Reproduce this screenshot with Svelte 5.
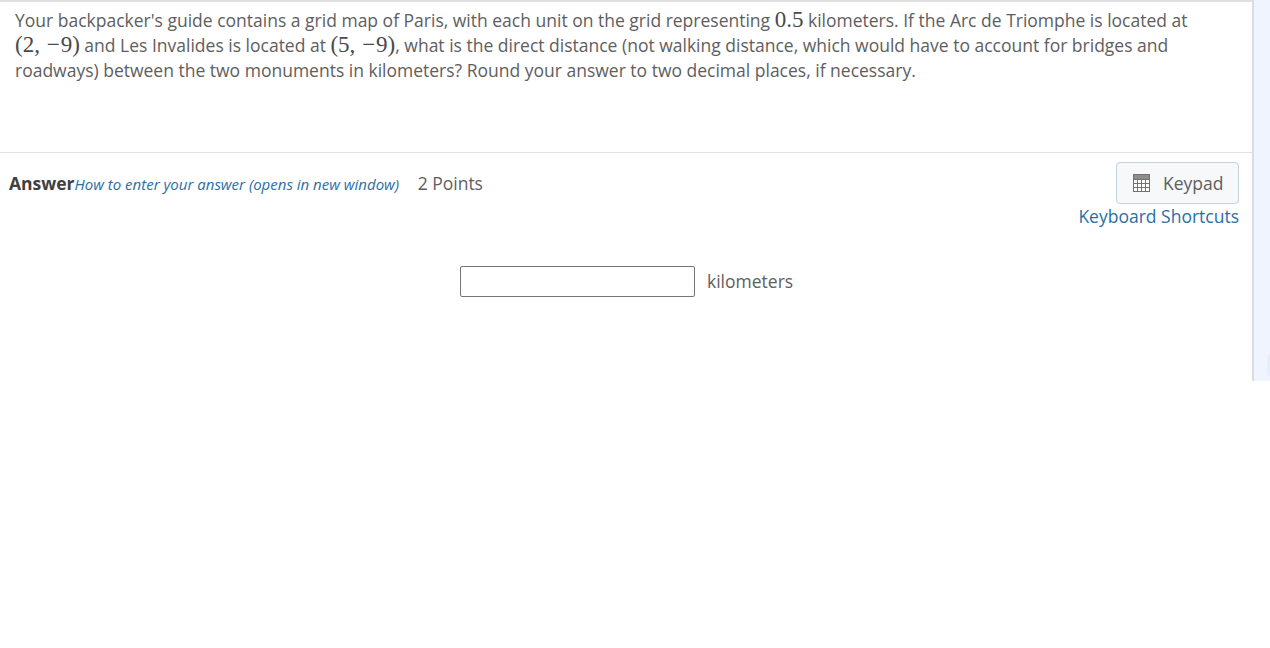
<script>
	let answer = $state('')
	const columns = [4, 8, 12]
	const rows = [9, 13]
</script>

<div class="shell">
	<main class="panel">
		<section class="question">
			<p>
				Your backpacker's guide contains a grid map of Paris, with each unit on the grid representing <span class="math">0.5</span> kilometers. If the Arc de Triomphe is located at
				<span class="math">(2, <span class="minus">−</span>9)</span> and Les Invalides is located at <span class="math">(5, <span class="minus">−</span>9)</span>, what is the direct distance (not walking distance, which would have to account for bridges and
				roadways) between the two monuments in kilometers? Round your answer to two decimal places, if necessary.
			</p>
		</section>

		<section class="answer">
			<div class="head">
				<div class="title">
					<strong>Answer</strong><a href="#help" class="help">How to enter your answer (opens in new window)</a>
					<span class="points">2 Points</span>
				</div>
				<div class="tools">
					<button class="keypad" type="button">
						<svg width="17" height="18" viewBox="0 0 17 18" aria-hidden="true">
							<rect x="0.5" y="0.5" width="16" height="17" fill="#fff" stroke="#77706c" />
							<rect x="1" y="1" width="15" height="4" fill="#8d8d8d" />
							{#each columns as c}
								<path d="M{c + 0.5} 5V17" stroke="#77706c" fill="none" />
							{/each}
							{#each rows as r}
								<path d="M1 {r + 0.5}H16" stroke="#77706c" fill="none" />
							{/each}
							<path d="M1 5.5H16" stroke="#77706c" fill="none" />
						</svg>
						<span>Keypad</span>
					</button>
					<a href="#shortcuts" class="shortcuts">Keyboard Shortcuts</a>
				</div>
			</div>
			<div class="entry">
				<input type="text" bind:value={answer} aria-label="Answer" />
				<span class="unit">kilometers</span>
			</div>
		</section>
	</main>
	<aside class="rail"><div class="handle"></div></aside>
</div>

<style>
	:global(body) {
		margin: 0;
		background: #fff;
	}
	.shell {
		display: flex;
		height: 381px;
		font-family: "Open Sans", sans-serif;
		font-size: 17.5px;
		color: #5e5e5e;
	}
	.panel {
		flex: 1;
		box-sizing: border-box;
		border-top: 2px solid #e0e0e0;
		border-right: 2px solid #dcdcdc;
	}
	.question {
		box-sizing: border-box;
		height: 151px;
		padding: 6px 15px 0;
		border-bottom: 1px solid #e0e0e0;
	}
	.question p {
		margin: 0;
		line-height: 25px;
	}
	.math {
		font-family: "Liberation Serif", serif;
		font-size: 23px;
		line-height: 20px;
		color: #4a4a4a;
		white-space: nowrap;
	}
	.minus {
		margin-left: 1px;
		margin-right: 1px;
	}
	.answer {
		padding: 9px 13px 0 9px;
	}
	.head {
		display: flex;
		justify-content: space-between;
		align-items: flex-start;
	}
	.title {
		margin-top: 8px;
		line-height: 26px;
	}
	.title strong {
		color: #404040;
		font-weight: 700;
	}
	.help {
		color: #2a6ea8;
		font-size: 15px;
		font-style: italic;
		text-decoration: none;
	}
	.points {
		margin-left: 14px;
	}
	.tools {
		display: flex;
		flex-direction: column;
		align-items: flex-end;
	}
	.keypad {
		display: flex;
		align-items: center;
		gap: 13px;
		box-sizing: border-box;
		width: 123px;
		height: 42px;
		padding: 0 0 0 16px;
		background: #f6f8fa;
		border: 1px solid #c3d2db;
		border-radius: 4px;
		font: inherit;
		color: #5e5e5e;
	}
	.shortcuts {
		line-height: 25px;
		color: #2a6ea8;
		text-decoration: none;
	}
	.entry {
		display: flex;
		align-items: center;
		gap: 12px;
		margin: 37px 0 0 451px;
	}
	.entry input {
		box-sizing: border-box;
		width: 235px;
		height: 31px;
		padding: 0 4px;
		background: #fff;
		border: 1px solid #767676;
		border-radius: 2px;
	}
	.unit {
		margin-top: -2px;
	}
	.rail {
		position: relative;
		overflow: hidden;
		width: 16px;
		background: #eff4ff;
	}
	.handle {
		position: absolute;
		top: 350px;
		left: 13px;
		width: 20px;
		height: 30px;
		border-radius: 10px;
		background: #e6edfd;
	}
</style>
